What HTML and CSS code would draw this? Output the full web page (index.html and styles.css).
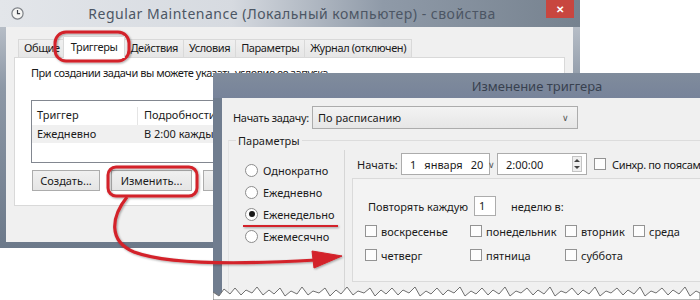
FILE: index.html
```html
<!DOCTYPE html>
<html lang="ru">
<head>
    <meta charset="UTF-8">
    <title>Изменение триггера</title>
    <link rel="stylesheet" href="styles.css">
</head>
<body>
<div class="desk">

    <!-- window 1: task properties -->
    <div class="window props">
        <div class="titlebar">
            <svg class="app-icon" width="13" height="13" viewBox="0 0 13 13">
                <circle cx="6.5" cy="6.5" r="5.6" fill="#f6f6f4" stroke="#7d8186" stroke-width="1.2"/>
                <path d="M6.5 3v3.6h2.6" fill="none" stroke="#3c4148" stroke-width="1.2"/>
            </svg>
            <span class="title">Regular Maintenance (Локальный компьютер) - свойства</span>
            <span class="close">&#x2715;</span>
        </div>
        <div class="win-body">
            <div class="tabs">
                <span class="tab">Общие</span>
                <span class="tab active">Триггеры</span>
                <span class="tab">Действия</span>
                <span class="tab">Условия</span>
                <span class="tab">Параметры</span>
                <span class="tab">Журнал (отключен)</span>
            </div>
            <div class="panel">
                <p class="hint">При создании задачи вы можете указать условие ее запуска.</p>
                <div class="listview">
                    <div class="lv-head">
                        <span class="col c1">Триггер</span>
                        <span class="col">Подробности</span>
                    </div>
                    <div class="lv-row">
                        <span class="col c1">Ежедневно</span>
                        <span class="col">В 2:00 каждый день</span>
                    </div>
                </div>
                <div class="btn-row">
                    <button class="btn b-create">Создать...</button>
                    <button class="btn b-edit">Изменить...</button>
                    <button class="btn b-del">Удалить</button>
                </div>
            </div>
        </div>
    </div>

    <!-- window 2: edit trigger -->
    <div class="window trigger">
        <div class="titlebar">
            <span class="title">Изменение триггера</span>
        </div>
        <div class="win-body">
            <div class="start-row">
                <span class="lbl">Начать задачу:</span>
                <div class="select">
                    <span>По расписанию</span>
                    <span class="chev">&#x2228;</span>
                </div>
            </div>
            <div class="group">
                <span class="legend">Параметры</span>
                <div class="group-inner">
                    <div class="left-col">
                        <div class="radio-row"><span class="radio"></span>Однократно</div>
                        <div class="radio-row"><span class="radio"></span>Ежедневно</div>
                        <div class="radio-row"><span class="radio on"></span>Еженедельно</div>
                        <div class="radio-row"><span class="radio"></span>Ежемесячно</div>
                    </div>
                    <div class="right-col">
                        <div class="when-row">
                            <span class="lbl-start">Начать:</span>
                            <div class="field date">
                                <span>1</span><span>января</span><span>20</span><span class="chev">&#x2228;</span>
                            </div>
                            <div class="field time">
                                <span>2:00:00</span>
                                <span class="spin"><i class="up"></i><i class="down"></i></span>
                            </div>
                            <span class="check"></span>
                            <span class="sync">Синхр. по поясам</span>
                        </div>
                        <div class="inner-box">
                            <div class="repeat-row">
                                <span>Повторять каждую</span>
                                <span class="num">1</span>
                                <span>неделю в:</span>
                            </div>
                            <div class="days">
                                <span class="day"><span class="check"></span>воскресенье</span>
                                <span class="day"><span class="check"></span>понедельник</span>
                                <span class="day"><span class="check"></span>вторник</span>
                                <span class="day"><span class="check"></span>среда</span>
                                <span class="day"><span class="check"></span>четверг</span>
                                <span class="day"><span class="check"></span>пятница</span>
                                <span class="day"><span class="check"></span>суббота</span>
                            </div>
                        </div>
                    </div>
                </div>
            </div>
        </div>
    </div>

    <!-- torn bottom edge of window 2 -->
    <svg class="torn" width="487" height="20" viewBox="0 0 487 20">
        <path d="M0 12 L6 16 L11 9 L17 14 L22 8 L28 15 L33 10 L39 13 L44 7 L50 15 L56 10 L61 14 L67 8 L72 16 L78 11 L84 14 L89 7 L95 15 L100 11 L106 13 L112 8 L117 16 L123 10 L128 14 L134 7 L140 15 L145 11 L151 13 L157 8 L162 16 L168 10 L173 14 L179 8 L185 15 L190 10 L196 13 L202 7 L207 16 L213 11 L218 14 L224 8 L230 15 L235 10 L241 13 L247 7 L252 16 L258 11 L263 14 L269 8 L275 15 L280 10 L286 14 L292 7 L297 16 L303 11 L308 13 L314 8 L320 15 L325 10 L331 14 L337 7 L342 16 L348 11 L353 13 L359 8 L365 15 L370 10 L376 14 L382 7 L387 16 L393 11 L398 13 L404 8 L410 15 L415 10 L421 14 L427 7 L432 16 L438 11 L443 13 L449 8 L455 15 L460 10 L466 14 L472 7 L477 16 L483 11 L487 13 L487 20 L0 20 Z" fill="#fff" stroke="#707070" stroke-width="1"/>
    </svg>

    <!-- red marks over the screenshot -->
    <svg class="marks" width="700" height="300" viewBox="0 0 700 300">
        <defs>
            <filter id="sh" x="-10%" y="-10%" width="120%" height="120%">
                <feDropShadow dx="1" dy="1" stdDeviation="0.8" flood-color="#000" flood-opacity="0.35"/>
            </filter>
        </defs>
        <g filter="url(#sh)" fill="none" stroke="#d3222a">
            <rect x="55" y="32" width="74" height="29" rx="11" stroke-width="3"/>
            <rect x="108" y="167" width="89" height="29" rx="8" stroke-width="3"/>
            <path d="M243 226H338" stroke-width="2"/>
            <path d="M127 197C111 217 108 241 134 252C166 264 232 265 316 260" stroke-width="3.2"/>
            <path d="M312 251L342 256L314 268Z" fill="#d3222a" stroke-width="1"/>
        </g>
    </svg>
</div>
</body>
</html>
```

FILE: styles.css
```css
* {
    box-sizing: border-box;
    margin: 0;
    padding: 0;
}

body {
    width: 700px;
    height: 300px;
    overflow: hidden;
    background: #fff;
    font-family: "Noto Sans", "Open Sans", sans-serif;
    font-size: 11px;
    color: #1b1b1b;
}

.desk {
    position: relative;
    width: 700px;
    height: 300px;
}

.window {
    position: absolute;
    display: flex;
    flex-direction: column;
}

/* ---------- window 1 ---------- */

.props {
    left: 0;
    top: 0;
    width: 580px;
    height: 248px;
    padding: 0 7px 6px 6px;
    background: linear-gradient(#c9ced5, #8d98a6 35%, #6c798a 100%);
}

.props .titlebar {
    height: 27px;
    margin: 0 -7px 0 -6px;
    display: flex;
    align-items: center;
    background: linear-gradient(90deg, #e3e6ea 0%, #d6dae0 40%, #8f9aa8 66%, #76828f 100%);
}

.app-icon {
    margin-left: 11px;
    flex-shrink: 0;
}

.props .title {
    flex: 1;
    padding-left: 14px;
    text-align: center;
    font-size: 14px;
    letter-spacing: 0.5px;
    color: #4c5664;
    white-space: nowrap;
}

.close {
    align-self: flex-start;
    width: 28px;
    height: 18px;
    margin-right: 6px;
    background: #c8463f;
    color: #fff;
    font-size: 10px;
    font-weight: bold;
    text-align: center;
    line-height: 18px;
}

.props .win-body {
    flex: 1;
    background: #f0f0f0;
    padding: 9px 8px 0 8px;
}

.tabs {
    display: flex;
    align-items: flex-end;
    height: 21px;
    padding-left: 4px;
    letter-spacing: -0.4px;
}

.tab {
    height: 18px;
    padding: 0 5px;
    border: 1px solid #d9d9d9;
    border-bottom: none;
    margin-right: -1px;
    background: linear-gradient(#f0f0f0, #e6e6e6);
    line-height: 16px;
    white-space: nowrap;
}

.tab.active {
    height: 22px;
    margin: 0 -1px -1px -2px;
    padding: 0 7px;
    background: #fff;
    position: relative;
    z-index: 1;
    line-height: 20px;
}

.panel {
    height: 149px;
    border: 1px solid #d9d9d9;
    background: #fff;
    padding: 7px 0 0 16px;
}

.hint {
    line-height: 16px;
    white-space: nowrap;
    letter-spacing: -0.45px;
}

.listview {
    margin-top: 19px;
    width: 520px;
    height: 63px;
    border: 1px solid #828790;
}

.lv-head {
    display: flex;
    height: 24px;
    padding-top: 6px;
    line-height: 16px;
}

.lv-row {
    display: flex;
    height: 18px;
    line-height: 18px;
    background: #f0f0f0;
}

.col {
    padding-left: 6px;
    white-space: nowrap;
}

.col.c1 {
    width: 106px;
    padding-left: 5px;
}

.lv-head .c1 {
    border-right: 1px solid #e5e5e5;
}

.btn-row {
    display: flex;
    gap: 11px;
    margin-top: 7px;
    padding-left: 1px;
}

.btn {
    height: 21px;
    border: 1px solid #acacac;
    background: linear-gradient(#f0f0f0, #e5e5e5);
    font-family: inherit;
    font-size: 11px;
    color: #1b1b1b;
}

.b-create {
    width: 68px;
}

.b-edit {
    width: 81px;
}

.b-del {
    width: 75px;
}

/* ---------- window 2 ---------- */

.trigger {
    left: 213px;
    top: 73px;
    width: 648px;
    height: 227px;
    padding-left: 9px;
    background: #707d8f;
}

.trigger .titlebar {
    height: 27px;
    margin-left: -9px;
    display: flex;
    align-items: center;
    justify-content: center;
    background: linear-gradient(#808c9c, #77839a);
}

.trigger .title {
    font-size: 13px;
    color: #38414f;
}

.trigger .win-body {
    flex: 1;
    background: #f0f0f0;
    padding: 8px 0 0 11px;
}

.start-row {
    display: flex;
    align-items: center;
    height: 23px;
}

.lbl {
    width: 79px;
    flex-shrink: 0;
    white-space: nowrap;
    letter-spacing: -0.3px;
}

.select {
    width: 266px;
    height: 23px;
    display: flex;
    align-items: center;
    justify-content: space-between;
    padding: 0 8px 0 5px;
    border: 1px solid #acacac;
    background: linear-gradient(#f3f3f3, #e6e6e6);
}

.chev {
    font-size: 9px;
    color: #555;
}

.group {
    position: relative;
    margin: 11px 0 0 -5px;
    border-top: 1px solid #dcdcdc;
    border-left: 1px solid #e4e4e4;
    height: 160px;
}

.legend {
    position: absolute;
    left: 7px;
    top: -7px;
    padding: 0 2px;
    background: #f0f0f0;
    line-height: 13px;
}

.group-inner {
    display: flex;
    height: 100%;
}

.left-col {
    width: 116px;
    flex-shrink: 0;
    margin-top: 9px;
    padding: 9px 0 0 16px;
    border-right: 1px solid #d6d6d6;
}

.radio-row {
    display: flex;
    align-items: center;
    gap: 5px;
    height: 22px;
    white-space: nowrap;
}

.radio {
    width: 13px;
    height: 13px;
    border-radius: 50%;
    border: 1px solid #8c8c8c;
    background: #fff;
    display: flex;
    align-items: center;
    justify-content: center;
}

.radio.on::after {
    content: "";
    width: 6px;
    height: 6px;
    border-radius: 50%;
    background: #1a1a1a;
}

.right-col {
    flex: 1;
    margin-top: 12px;
    padding-left: 7px;
}

.when-row {
    display: flex;
    align-items: center;
    height: 22px;
    padding-left: 5px;
}

.lbl-start {
    width: 44px;
    flex-shrink: 0;
}

.field {
    height: 22px;
    flex-shrink: 0;
    display: flex;
    align-items: center;
    border: 1px solid #acacac;
    background: #fff;
}

.date {
    width: 89px;
    gap: 8px;
    padding-left: 8px;
}

.date .chev {
    margin-left: -3px;
}

.time {
    width: 90px;
    margin-left: 7px;
    padding: 0 4px 0 8px;
    justify-content: space-between;
}

.spin {
    display: flex;
    flex-direction: column;
    align-items: center;
    justify-content: space-around;
    width: 10px;
    height: 16px;
    border: 1px solid #c4c4c4;
    background: #efefef;
}

.spin i {
    width: 0;
    height: 0;
    border-left: 3px solid transparent;
    border-right: 3px solid transparent;
}

.spin .up {
    border-bottom: 3px solid #444;
}

.spin .down {
    border-top: 3px solid #444;
}

.check {
    width: 12px;
    height: 12px;
    border: 1px solid #939393;
    background: #fdfdfd;
    flex-shrink: 0;
}

.when-row .check {
    margin-left: 7px;
}

.sync {
    margin-left: 6px;
    white-space: nowrap;
    letter-spacing: -0.35px;
}

.inner-box {
    margin-top: 3px;
    width: 400px;
    height: 104px;
    border: 1px solid #dadada;
    background: #f3f3f3;
    padding: 17px 0 0 12px;
}

.repeat-row {
    display: flex;
    align-items: center;
    height: 20px;
    padding-left: 3px;
}

.num {
    width: 22px;
    height: 20px;
    margin: 0 15px 0 6px;
    border: 1px solid #acacac;
    background: #fff;
    padding-left: 4px;
    line-height: 18px;
}

.days {
    display: grid;
    grid-template-columns: 105px 95px 68px auto;
    grid-auto-rows: 24px;
    margin-top: 3px;
}

.day {
    display: flex;
    align-items: center;
    gap: 4px;
}

/* ---------- overlays ---------- */

.torn {
    position: absolute;
    left: 213px;
    top: 280px;
}

.marks {
    position: absolute;
    left: 0;
    top: 0;
    pointer-events: none;
}
```
